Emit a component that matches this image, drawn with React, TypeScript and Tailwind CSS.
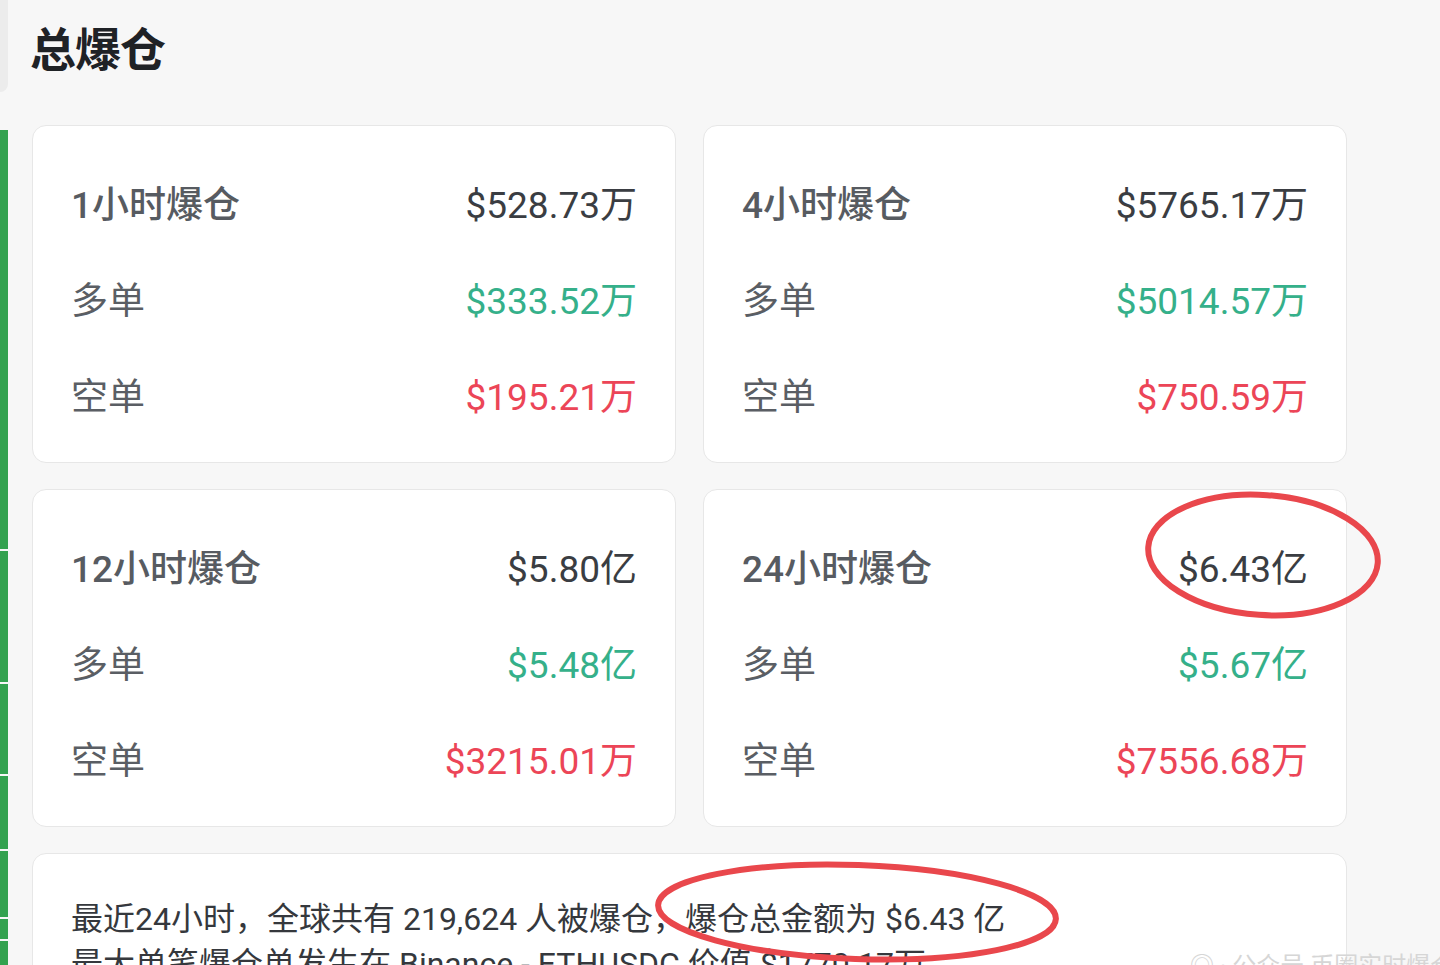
import React from "react"

type Row = { label: string; value: string; tone: "base" | "long" | "short" }

const cards: Row[][] = [
  [
    { label: "1小时爆仓", value: "$528.73万", tone: "base" },
    { label: "多单", value: "$333.52万", tone: "long" },
    { label: "空单", value: "$195.21万", tone: "short" },
  ],
  [
    { label: "4小时爆仓", value: "$5765.17万", tone: "base" },
    { label: "多单", value: "$5014.57万", tone: "long" },
    { label: "空单", value: "$750.59万", tone: "short" },
  ],
  [
    { label: "12小时爆仓", value: "$5.80亿", tone: "base" },
    { label: "多单", value: "$5.48亿", tone: "long" },
    { label: "空单", value: "$3215.01万", tone: "short" },
  ],
  [
    { label: "24小时爆仓", value: "$6.43亿", tone: "base" },
    { label: "多单", value: "$5.67亿", tone: "long" },
    { label: "空单", value: "$7556.68万", tone: "short" },
  ],
]

const toneClass = {
  base: "text-[#3a3d42]",
  long: "text-[#35b08a]",
  short: "text-[#ec4557]",
}

const font = { fontFamily: "Roboto, 'Noto Sans CJK SC', sans-serif" }

function StatCard({ rows }: { rows: Row[] }) {
  return (
    <div className="bg-white border border-[#e7e7e7] rounded-[14px] px-[38px] pt-[31px] pb-[18px] h-[338px]">
      {rows.map((r, i) => (
        <div key={i} className="flex items-center justify-between h-[96px] text-[37px] leading-none">
          <span className={i === 0 ? "text-[#575b61] font-medium" : "text-[#5a5e64]"}>{r.label}</span>
          <span className={toneClass[r.tone]}>{r.value}</span>
        </div>
      ))}
    </div>
  )
}

export default function App() {
  return (
    <div className="relative flex h-[965px] w-[1440px] overflow-hidden bg-[#f7f7f7]" style={font}>
      {/* cropped sidebar strip */}
      <div className="w-[8px] flex flex-col shrink-0">
        <div className="h-[92px] shrink-0 rounded-br-[10px] bg-[#ececec]" />
        <div className="h-[38px] shrink-0" />
        <div className="flex flex-col gap-[2px]">
          <div className="h-[419px] shrink-0 bg-[#33a24f]" />
          <div className="h-[131px] shrink-0 bg-[#33a24f]" />
          <div className="h-[90px] shrink-0 bg-[#33a24f]" />
          <div className="h-[73px] shrink-0 bg-[#33a24f]" />
          <div className="h-[66px] shrink-0 bg-[#33a24f]" />
          <div className="h-[20px] shrink-0 bg-[#33a24f]" />
          <div className="h-[40px] shrink-0 bg-[#33a24f]" />
        </div>
      </div>

      <div className="pl-[24px] pt-[27px] w-[1339px] shrink-0">
        <h1 className="text-[46px] font-bold leading-none text-[#1f2226] tracking-[-1px] -ml-[2px]">总爆仓</h1>

        <div className="mt-[52px] grid grid-cols-2 gap-x-[27px] gap-y-[26px]">
          {cards.map((rows, i) => (
            <StatCard key={i} rows={rows} />
          ))}
        </div>

        <div className="mt-[26px] bg-white border border-[#e7e7e7] rounded-[14px] px-[38px] pt-[43px] h-[200px]">
          <p className="text-[32px] leading-[45px] text-[#35383d] whitespace-nowrap">
            最近24小时，全球共有 219,624 人被爆仓，爆仓总金额为 $6.43 亿
          </p>
          <p className="text-[32px] leading-[45px] text-[#35383d] whitespace-nowrap">
            最大单笔爆仓单发生在 Binance - ETHUSDC 价值 $1770.17万
          </p>
        </div>
      </div>

      {/* watermark */}
      <div className="absolute left-[1190px] top-[948px] text-[24px] text-[#d6d6d6] whitespace-nowrap">
        ◎ · 公众号 币圈实时爆仓
      </div>

      {/* hand-drawn annotations */}
      <svg className="absolute inset-0 pointer-events-none" width="1440" height="965">
        <ellipse cx="1263" cy="555" rx="115" ry="60" fill="none" stroke="#e9474c" strokeWidth="6" transform="rotate(4 1263 555)" />
        <ellipse cx="857" cy="912" rx="199" ry="47" fill="none" stroke="#e9474c" strokeWidth="6" transform="rotate(2 857 912)" />
      </svg>
    </div>
  )
}
